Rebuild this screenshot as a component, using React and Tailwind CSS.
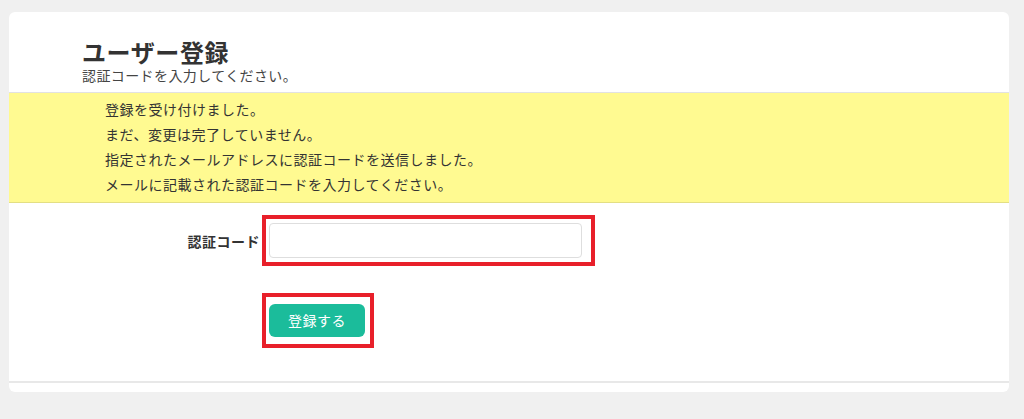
import React from 'react';

export default function App() {
  const notices = [
    '登録を受け付けました。',
    'まだ、変更は完了していません。',
    '指定されたメールアドレスに認証コードを送信しました。',
    'メールに記載された認証コードを入力してください。',
  ];

  return (
    <div
      className="min-h-[419px] bg-[#f0f0f0] pt-[12px] pl-[9px] text-[#333]"
      style={{ fontFamily: '"Noto Sans CJK JP", "Noto Sans", sans-serif' }}
    >
      <div className="w-[1000px] rounded-md bg-white">
        {/* Header */}
        <div className="pl-[73px] pt-[26px] pb-[8px]">
          <h1 className="text-[24px] font-bold leading-[28px] tracking-[0.6px] text-[#333]">ユーザー登録</h1>
          <p className="text-[14px] leading-[18px] tracking-[0.4px] text-[#444]">認証コードを入力してください。</p>
        </div>

        {/* Notice */}
        <div className="border-t border-b border-t-[#e2e2e2] border-b-[#e3df84] bg-[#fffa91] pl-[96px] pt-[4px] pb-[5px]">
          {notices.map((line) => (
            <p key={line} className="text-[14px] leading-[25px] tracking-[0.5px] text-[#333]">
              {line}
            </p>
          ))}
        </div>

        {/* Form */}
        <div className="pt-[12px] pb-[33px]">
          <div className="flex items-center">
            <label className="w-[251px] pt-[1px] text-right text-[14px] font-bold tracking-[0.5px] text-[#333]">認証コード</label>
            <div className="ml-[2px] border-4 border-[#e8202a] pl-[3px] pr-[9px] py-[4px]">
              <input
                type="text"
                className="block h-[35px] w-[313px] rounded border border-[#dedede] bg-white px-2 text-[14px] outline-none"
              />
            </div>
          </div>
          <div className="mt-[27px] flex">
            <div className="ml-[253px] border-4 border-[#e8202a] pl-[3px] pr-[5px] py-[7px]">
              <button className="flex h-[33px] w-[96px] items-center justify-center rounded-md bg-[#1bbc9b] text-[14px] tracking-[0.5px] text-white">
                登録する
              </button>
            </div>
          </div>
        </div>

        {/* Footer strip */}
        <div className="border-t-2 border-[#e8e8e8] h-[11px] rounded-b-md"></div>
      </div>
    </div>
  );
}
